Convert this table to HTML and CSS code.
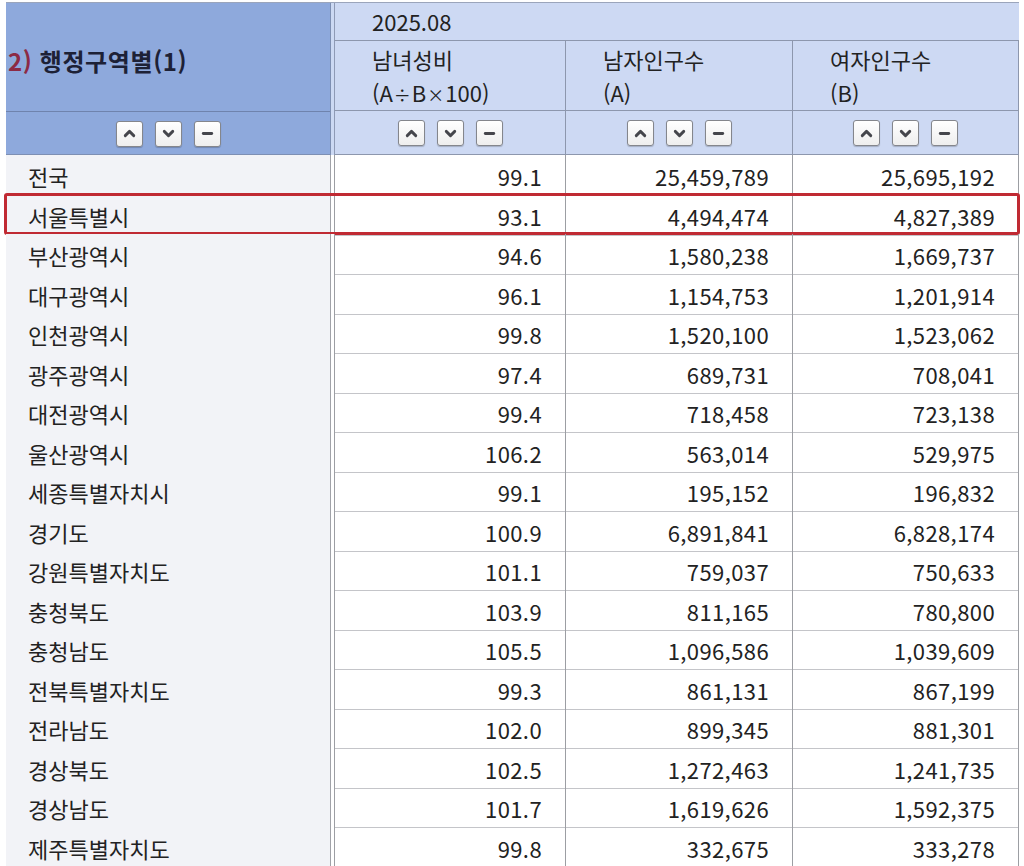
FILE: index.html
```html
<!DOCTYPE html>
<html lang="ko">
<head>
<meta charset="utf-8">
<title>행정구역별 성비</title>
<link rel="stylesheet" href="styles.css">
</head>
<body>
<div class="sheet">
  <div class="head">
    <div class="head-left">
      <div class="title"><span class="idx">2)</span> 행정구역별(1)</div>
      <div class="btns">
        <span class="btn"><svg viewBox="0 0 12 12"><path d="M3 7.5 L6 4.5 L9 7.5"/></svg></span>
        <span class="btn"><svg viewBox="0 0 12 12"><path d="M3 4.5 L6 7.5 L9 4.5"/></svg></span>
        <span class="btn"><svg viewBox="0 0 12 12"><path d="M3 6 H9"/></svg></span>
      </div>
    </div>
    <div class="head-gap"></div>
    <div class="head-right">
      <div class="date">2025.08</div>
      <div class="cols labels">
        <div class="lab">남녀성비<br>(A<span class="op">÷</span>B<span class="op">×</span>100)</div>
        <div class="lab">남자인구수<br>(A)</div>
        <div class="lab">여자인구수<br>(B)</div>
      </div>
      <div class="cols btnrow">
        <div class="btns">
          <span class="btn"><svg viewBox="0 0 12 12"><path d="M3 7.5 L6 4.5 L9 7.5"/></svg></span>
          <span class="btn"><svg viewBox="0 0 12 12"><path d="M3 4.5 L6 7.5 L9 4.5"/></svg></span>
          <span class="btn"><svg viewBox="0 0 12 12"><path d="M3 6 H9"/></svg></span>
        </div>
        <div class="btns">
          <span class="btn"><svg viewBox="0 0 12 12"><path d="M3 7.5 L6 4.5 L9 7.5"/></svg></span>
          <span class="btn"><svg viewBox="0 0 12 12"><path d="M3 4.5 L6 7.5 L9 4.5"/></svg></span>
          <span class="btn"><svg viewBox="0 0 12 12"><path d="M3 6 H9"/></svg></span>
        </div>
        <div class="btns">
          <span class="btn"><svg viewBox="0 0 12 12"><path d="M3 7.5 L6 4.5 L9 7.5"/></svg></span>
          <span class="btn"><svg viewBox="0 0 12 12"><path d="M3 4.5 L6 7.5 L9 4.5"/></svg></span>
          <span class="btn"><svg viewBox="0 0 12 12"><path d="M3 6 H9"/></svg></span>
        </div>
      </div>
    </div>
  </div>
  <div class="body">
    <div class="row"><div class="name">전국</div><div class="gap"></div><div class="val">99.1</div><div class="val">25,459,789</div><div class="val">25,695,192</div></div>
    <div class="row hl"><div class="name">서울특별시</div><div class="gap"></div><div class="val">93.1</div><div class="val">4,494,474</div><div class="val">4,827,389</div></div>
    <div class="row"><div class="name">부산광역시</div><div class="gap"></div><div class="val">94.6</div><div class="val">1,580,238</div><div class="val">1,669,737</div></div>
    <div class="row"><div class="name">대구광역시</div><div class="gap"></div><div class="val">96.1</div><div class="val">1,154,753</div><div class="val">1,201,914</div></div>
    <div class="row"><div class="name">인천광역시</div><div class="gap"></div><div class="val">99.8</div><div class="val">1,520,100</div><div class="val">1,523,062</div></div>
    <div class="row"><div class="name">광주광역시</div><div class="gap"></div><div class="val">97.4</div><div class="val">689,731</div><div class="val">708,041</div></div>
    <div class="row"><div class="name">대전광역시</div><div class="gap"></div><div class="val">99.4</div><div class="val">718,458</div><div class="val">723,138</div></div>
    <div class="row"><div class="name">울산광역시</div><div class="gap"></div><div class="val">106.2</div><div class="val">563,014</div><div class="val">529,975</div></div>
    <div class="row"><div class="name">세종특별자치시</div><div class="gap"></div><div class="val">99.1</div><div class="val">195,152</div><div class="val">196,832</div></div>
    <div class="row"><div class="name">경기도</div><div class="gap"></div><div class="val">100.9</div><div class="val">6,891,841</div><div class="val">6,828,174</div></div>
    <div class="row"><div class="name">강원특별자치도</div><div class="gap"></div><div class="val">101.1</div><div class="val">759,037</div><div class="val">750,633</div></div>
    <div class="row"><div class="name">충청북도</div><div class="gap"></div><div class="val">103.9</div><div class="val">811,165</div><div class="val">780,800</div></div>
    <div class="row"><div class="name">충청남도</div><div class="gap"></div><div class="val">105.5</div><div class="val">1,096,586</div><div class="val">1,039,609</div></div>
    <div class="row"><div class="name">전북특별자치도</div><div class="gap"></div><div class="val">99.3</div><div class="val">861,131</div><div class="val">867,199</div></div>
    <div class="row"><div class="name">전라남도</div><div class="gap"></div><div class="val">102.0</div><div class="val">899,345</div><div class="val">881,301</div></div>
    <div class="row"><div class="name">경상북도</div><div class="gap"></div><div class="val">102.5</div><div class="val">1,272,463</div><div class="val">1,241,735</div></div>
    <div class="row"><div class="name">경상남도</div><div class="gap"></div><div class="val">101.7</div><div class="val">1,619,626</div><div class="val">1,592,375</div></div>
    <div class="row"><div class="name">제주특별자치도</div><div class="gap"></div><div class="val">99.8</div><div class="val">332,675</div><div class="val">333,278</div></div>
  </div>
</div>
</body>
</html>
```

FILE: styles.css
```css
* { box-sizing: border-box; }
html, body { margin: 0; padding: 0; background: #ffffff; }
body {
  font-family: "Noto Sans CJK KR", "Noto Sans", sans-serif;
  color: #222222;
  font-size: 22px;
  overflow: hidden;
}
.sheet {
  margin: 2px 0 0 6px;
  width: 1013px;
}
.head {
  display: grid;
  grid-template-columns: 325px 3px 685px;
  border-top: 1px solid #9ba5bb;
}
.head-left {
  background: #8ea9dc;
  border-right: 1px solid #7d8fb3;
  display: flex;
  flex-direction: column;
}
.title {
  height: 109px;
  border-bottom: 1px solid #6f83ad;
  padding: 41px 0 0 2px;
  font-weight: 700;
  font-size: 24px;
  letter-spacing: 0.6px;
  line-height: 34px;
  color: #1d2136;
}
.title .idx { color: #8c2a45; }
.head-gap { background: #ccd9f3; }
.head-right {
  background: #cdd9f3;
  border-left: 1px solid #8e9ab5;
}
.date {
  height: 38px;
  border-bottom: 1px solid #8d97ad;
  padding: 0 0 0 37px;
  line-height: 36px;
}
.cols {
  display: grid;
  grid-template-columns: 231px 227px 226px;
}
.labels { border-bottom: 1px solid #8d97ad; height: 70px; }
.lab {
  padding: 2px 0 0 37px;
  line-height: 33px;
  border-right: 1px solid #8d97ad;
}
.lab .op { font-size: 17px; margin: 0 1px; }
.btnrow { height: 44px; border-bottom: 1px solid #8d97ad; }
.btnrow .btns { border-right: 1px solid #8d97ad; }
.btns {
  height: 100%;
  flex: 1;
  display: flex;
  justify-content: center;
  align-items: center;
  gap: 12px;
  padding-top: 1px;
}
.head-left .btns { height: 43px; border-bottom: 1px solid #7d8fb3; gap: 12px; }
.btn {
  width: 27px;
  height: 26px;
  background: linear-gradient(#ffffff, #eeeeee);
  border: 1px solid #84868c;
  border-radius: 3px;
  box-shadow: 0 1px 1px rgba(0,0,0,0.2);
  display: flex;
  align-items: center;
  justify-content: center;
}
.btn svg {
  width: 17px;
  height: 17px;
  fill: none;
  stroke: #45464c;
  stroke-width: 2;
  stroke-linecap: round;
  stroke-linejoin: round;
}
.row {
  display: grid;
  grid-template-columns: 325px 3px 232px 227px 226px;
  height: 39.5px;
  position: relative;
}
.name {
  background: #f2f3f7;
  border-right: 1px solid #a0a2a8;
  border-bottom: 1px solid #b4b6bb;
  padding: 2px 0 0 22px;
  line-height: 38px;
}
.gap { background: #ffffff; }
.val {
  border-right: 1px solid #9c9ea3;
  border-bottom: 1px solid #c4c5c9;
  text-align: right;
  padding: 2px 23px 0 0;
  line-height: 38px;
  letter-spacing: 0.4px;
}
.row .gap + .val { border-left: 1px solid #9c9ea3; }
.row.hl::after {
  content: "";
  position: absolute;
  left: -2px;
  right: -1px;
  top: -2px;
  bottom: -1px;
  border: 3px solid #c02a33;
  border-radius: 3px;
  pointer-events: none;
}
```
